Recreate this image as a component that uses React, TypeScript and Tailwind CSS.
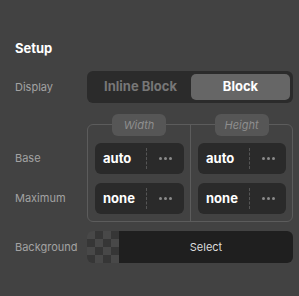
const CHECKER = [0, 1, 0, 1, 1, 0, 1, 0, 0, 1, 0, 1, 1, 0, 1, 0];

function Dots() {
  return (
    <div className="flex flex-1 items-center justify-center gap-[2px]">
      <span className="h-[3px] w-[3px] rounded-full bg-[#8a8a8a]" />
      <span className="h-[3px] w-[3px] rounded-full bg-[#8a8a8a]" />
      <span className="h-[3px] w-[3px] rounded-full bg-[#8a8a8a]" />
    </div>
  );
}

function SizeInput({ value }: { value: string }) {
  return (
    <div className="flex h-[31px] items-center rounded-md bg-[#2a2a2a]">
      <div className="w-[51px] pl-2 text-[13px] font-bold text-white">{value}</div>
      <div className="h-[21px] border-l border-dashed border-[#555555]" />
      <Dots />
    </div>
  );
}

function Legend({ children }: { children: string }) {
  return (
    <div className="absolute -top-[11px] left-1/2 flex h-[22px] w-[54px] -translate-x-1/2 items-center justify-center rounded-md bg-[#565656] text-[11px] italic text-[#8e8e8e]">
      {children}
    </div>
  );
}

export default function App() {
  return (
    <div
      className="h-[296px] w-[299px] bg-[#424242] pl-[15px] pr-[6px] pt-[40px]"
      style={{ fontFamily: "Inter, 'Noto Sans', sans-serif" }}
    >
      <div className="text-[13px] font-bold leading-4 text-white">Setup</div>

      {/* Display */}
      <div className="mt-[15px] flex items-center">
        <div className="w-[72px] text-[11px] text-[#a3a3a3]">Display</div>
        <div className="flex h-[32px] w-[206px] rounded-md bg-[#2b2b2b] p-[3px]">
          <div className="flex flex-1 items-center justify-center text-[13px] font-bold text-[#777777]">
            Inline Block
          </div>
          <div className="flex w-[99px] items-center justify-center rounded-[5px] bg-[#666666] text-[13px] font-bold text-white">
            Block
          </div>
        </div>
      </div>

      {/* Size */}
      <div className="mt-[21px] flex">
        <div className="flex w-[72px] flex-col gap-[9px] pt-[19px]">
          <div className="flex h-[31px] items-center text-[11px] text-[#a3a3a3]">Base</div>
          <div className="flex h-[31px] items-center text-[11px] text-[#a3a3a3]">Maximum</div>
        </div>
        <div className="grid w-[206px] grid-cols-2 rounded-md border border-[#5c5c5c]">
          <div className="relative flex flex-col gap-[9px] pb-[7px] pl-[7px] pr-[6px] pt-[18px]">
            <Legend>Width</Legend>
            <SizeInput value="auto" />
            <SizeInput value="none" />
          </div>
          <div className="relative flex flex-col gap-[9px] border-l border-[#5c5c5c] pb-[7px] pl-[7px] pr-[6px] pt-[18px]">
            <Legend>Height</Legend>
            <SizeInput value="auto" />
            <SizeInput value="none" />
          </div>
        </div>
      </div>

      {/* Background */}
      <div className="mt-[9px] flex items-center">
        <div className="w-[72px] text-[11px] text-[#a3a3a3]">Background</div>
        <div className="flex h-[32px] w-[206px]">
          <div className="grid h-[32px] w-[32px] grid-cols-4 overflow-hidden rounded-l-md">
            {CHECKER.map((c, i) => (
              <div key={i} className={c ? "bg-[#363636]" : "bg-[#484848]"} />
            ))}
          </div>
          <div className="flex flex-1 items-center justify-center rounded-r-md bg-[#1f1f1f] text-[11px] text-[#dddddd]">
            Select
          </div>
        </div>
      </div>
    </div>
  );
}
